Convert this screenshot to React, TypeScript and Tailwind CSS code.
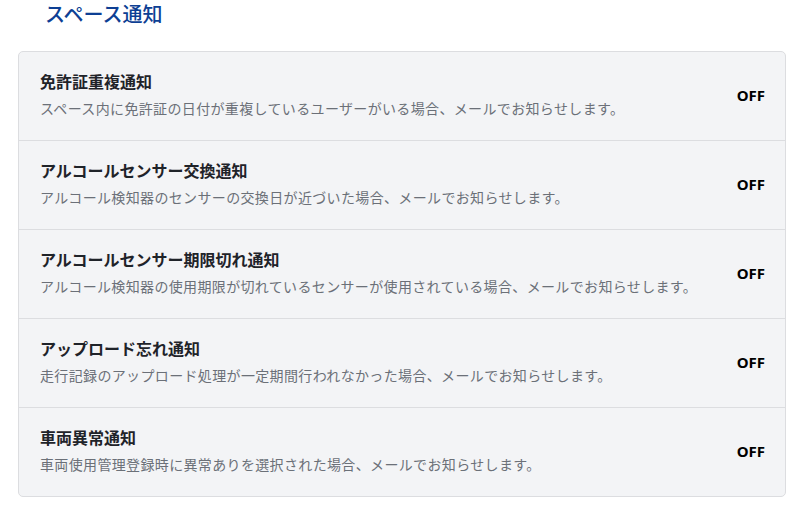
import React from "react";

const rows = [
  { t: "免許証重複通知", d: "スペース内に免許証の日付が重複しているユーザーがいる場合、メールでお知らせします。" },
  { t: "アルコールセンサー交換通知", d: "アルコール検知器のセンサーの交換日が近づいた場合、メールでお知らせします。" },
  { t: "アルコールセンサー期限切れ通知", d: "アルコール検知器の使用期限が切れているセンサーが使用されている場合、メールでお知らせします。" },
  { t: "アップロード忘れ通知", d: "走行記録のアップロード処理が一定期間行われなかった場合、メールでお知らせします。" },
  { t: "車両異常通知", d: "車両使用管理登録時に異常ありを選択された場合、メールでお知らせします。" },
];

export default function App() {
  return (
    <div
      className="w-[806px] h-[517px] bg-white overflow-hidden"
      style={{ fontFamily: '"Noto Sans", "Noto Sans CJK JP", sans-serif' }}
    >
      <h1 className="mt-[1px] pl-[45px] h-[28px] leading-[28px] text-[20px] font-medium text-[#0d3f94]">
        スペース通知
      </h1>
      <div className="mt-[22px] ml-[18px] w-[768px] rounded-[5px] border border-[#dcdde0] bg-[#f3f4f6]">
        {rows.map((r, i) => (
          <div
            key={i}
            className={`flex items-center justify-between pl-[21px] pr-[20px] pt-[18px] pb-[21px] ${
              i > 0 ? "border-t border-[#dcdde0]" : ""
            }`}
          >
            <div>
              <div className="text-[16px] leading-[24px] font-bold text-[#1f2329]">{r.t}</div>
              <div className="mt-[5px] text-[14px] leading-[20px] tracking-[0.35px] text-[#6b7078]">{r.d}</div>
            </div>
            <div className="text-[15px] leading-[20px] font-bold text-black">OFF</div>
          </div>
        ))}
      </div>
    </div>
  );
}
